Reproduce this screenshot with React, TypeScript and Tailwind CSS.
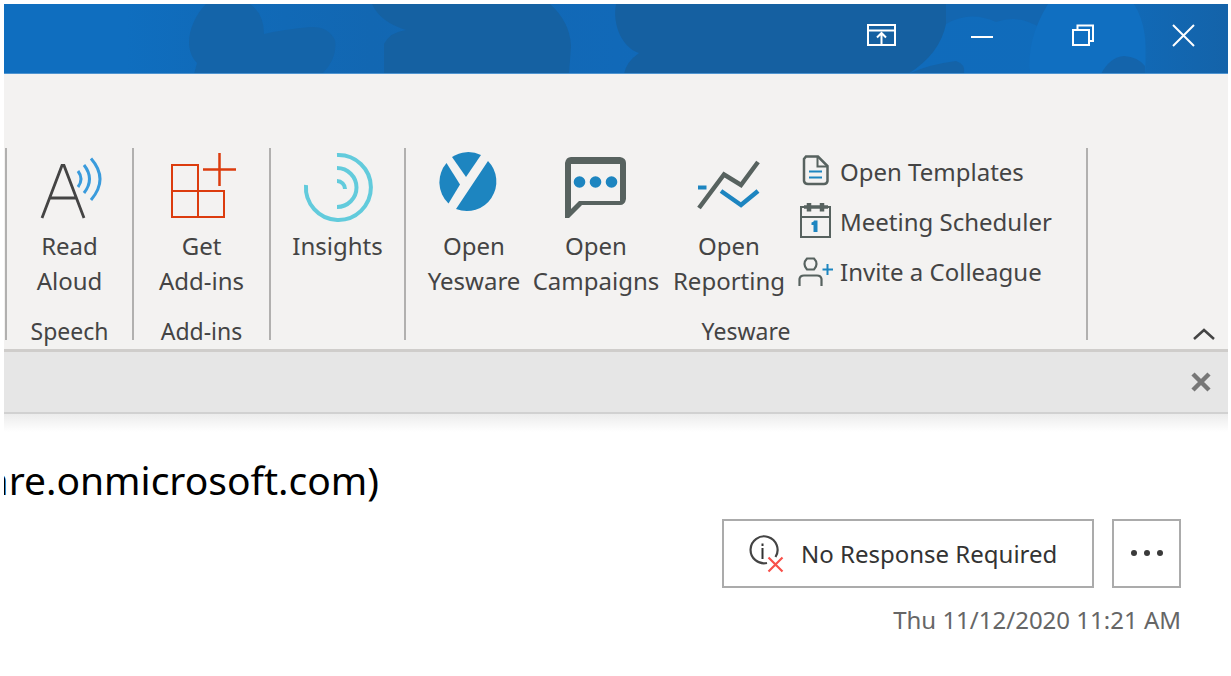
import type { ReactNode } from "react";

function TitleBackdrop() {
  return (
    <svg
      className="absolute inset-0 h-full w-full"
      viewBox="4 4 1224 70"
      preserveAspectRatio="xMaxYMin slice"
      aria-hidden="true"
    >
      <defs>
        <linearGradient id="bar" x1="0" x2="1" y1="0" y2="0">
          <stop offset="0" stopColor="#0f6ebf" />
          <stop offset="0.1" stopColor="#0f6ebf" />
          <stop offset="0.16" stopColor="#106bba" />
          <stop offset="0.3" stopColor="#1267b2" />
          <stop offset="0.5" stopColor="#1169b8" />
          <stop offset="0.7" stopColor="#106bbb" />
          <stop offset="1" stopColor="#106cbb" />
        </linearGradient>
        <linearGradient id="corner" x1="0" x2="1" y1="0" y2="0">
          <stop offset="0" stopColor="#1169b6" />
          <stop offset="1" stopColor="#1463a9" />
        </linearGradient>
      </defs>
      <rect x="4" y="4" width="1224" height="70" fill="url(#bar)" />
      <path
        d="M206 4C190 20 182 48 197 63L194 74H322Q338 58 335 40Q328 26 310 27Q280 30 264 34Q264 14 250 4Z"
        fill="#1464a9"
      />
      <path d="M372 4H550Q570 22 571 46L569 74H384V44Q390 32 406 30Q380 22 372 4Z" fill="#1561a2" />
      <path
        d="M616 4C612 24 622 48 639 53Q626 62 624 74H908Q940 54 946 24Q948 12 946 4Z"
        fill="#1560a1"
      />
      <path d="M946 4H1048Q1046 16 1040 28Q1020 14 996 22Q970 10 946 24Z" fill="#1366b0" />
      <path d="M908 74Q930 64 956 61Q966 64 964 74Z" fill="#1463a8" />
      <path d="M1048 4H1134Q1146 22 1145 46V74H1030Q1026 40 1048 4Z" fill="#106fc1" />
      <path d="M1134 4H1228V74H1145Q1150 30 1134 4Z" fill="url(#corner)" />
      <path d="M1101 74Q1110 57 1124 56Q1138 57 1145 66V74Z" fill="#1464ab" />
      <rect x="4" y="73" width="1224" height="1" fill="#4e94d0" />
    </svg>
  );
}

function TitleButton({ label, children }: { label: string; children: ReactNode }) {
  return (
    <button type="button" aria-label={label} className="flex h-10 w-10 items-center justify-center text-white">
      {children}
    </button>
  );
}

function TitleBar() {
  return (
    <header className="relative h-[70px] bg-[#0f6ebf]">
      <TitleBackdrop />
      <div className="relative flex items-start justify-end gap-[61px] pt-[11px] pr-6">
        <TitleButton label="Ribbon display options">
          <svg width="30" height="24" viewBox="0 0 30 24" fill="none" stroke="currentColor" strokeWidth="2">
            <path d="M2 2H29V22H2ZM2 7.500H29" />
            <path d="M15.500 22V9.500M11 14.500L15.500 10L20 14.500" />
          </svg>
        </TitleButton>
        <TitleButton label="Minimize">
          <svg width="24" height="24" viewBox="0 0 24 24" stroke="currentColor" strokeWidth="2">
            <path d="M1 14H23" />
          </svg>
        </TitleButton>
        <TitleButton label="Restore">
          <svg width="24" height="24" viewBox="0 0 24 24" fill="none" stroke="currentColor" strokeWidth="2">
            <path d="M2 7H18V22H2ZM6.500 7V2.500H22V18H18" />
          </svg>
        </TitleButton>
        <TitleButton label="Close">
          <svg width="24" height="24" viewBox="0 0 24 24" stroke="currentColor" strokeWidth="2">
            <path d="M1 2L22 23M22 2L1 23" />
          </svg>
        </TitleButton>
      </div>
    </header>
  );
}

function ReadAloudIcon() {
  return (
    <svg width="70" height="80" viewBox="35 148 70 80" fill="none" aria-hidden="true">
      <path d="M42 218L62 165.500H64L84 218M49.500 198H76.500" stroke="#444" strokeWidth="2.800" />
      <g stroke="#3a9bdc" strokeWidth="3">
        <path d="M78 171Q84 179 78 187" />
        <path d="M84 165Q95 179 84 193" />
        <path d="M91 158.500Q109 179 91 200" />
      </g>
    </svg>
  );
}

function AddInsIcon() {
  return (
    <svg width="70" height="80" viewBox="167 148 70 80" fill="none" stroke="#dc3c0e" strokeWidth="2" aria-hidden="true">
      <path d="M172 165H198V217H172ZM172 191H224V217H198" />
      <path d="M203 169.500H236M219.500 153V186" strokeWidth="2.500" />
    </svg>
  );
}

function InsightsIcon() {
  return (
    <svg width="76" height="80" viewBox="300 148 76 80" fill="none" stroke="#62cbdc" strokeWidth="4" aria-hidden="true">
      <path d="M337 155A32.500 32.500 0 1 1 306 185" />
      <path d="M337 168A19.500 19.500 0 0 1 337 207" />
      <path d="M337 181A8 8 0 0 1 345 189" />
    </svg>
  );
}

function YeswareIcon() {
  return (
    <svg width="76" height="80" viewBox="436 148 76 80" fill="#1d85c0" aria-hidden="true">
      <path d="M452 157A29.500 29.500 0 0 1 481 155L466 177Z" />
      <path d="M446.500 163L460 184.500L448.500 203.500A29.500 29.500 0 0 1 446.500 163Z" />
      <path d="M488 161A29.500 29.500 0 0 1 456 209Z" />
    </svg>
  );
}

function CampaignsIcon() {
  return (
    <svg width="70" height="80" viewBox="561 148 70 80" aria-hidden="true">
      <path
        fill="#57625f"
        fillRule="evenodd"
        d="M571 157H620Q626 158 626 163V199Q625 205 620 205H582L569 218H565V163Q566 157 571 157ZM571 164V209L579 201H620V164Z"
      />
      <g fill="#1d85c0">
        <circle cx="579.500" cy="182" r="5.800" />
        <circle cx="595.500" cy="182" r="5.800" />
        <circle cx="611.500" cy="182" r="5.800" />
      </g>
    </svg>
  );
}

function ReportingIcon() {
  return (
    <svg width="70" height="80" viewBox="694 148 70 80" fill="none" strokeWidth="4.500" aria-hidden="true">
      <path d="M699 208L724 174.500L741 185L758 162" stroke="#57625f" />
      <path d="M698 187.500H706.500" stroke="#1d85c0" strokeWidth="4" />
      <path d="M721 191L741 205L758 191" stroke="#1d85c0" />
    </svg>
  );
}

function TemplatesIcon() {
  return (
    <svg width="36" height="40" viewBox="798 152 36 40" fill="none" stroke="#57625f" strokeWidth="2.500" aria-hidden="true">
      <path d="M806 156.500H818L827.500 166V181Q827 184 824 184H808Q804.500 184 804 181V159Z" />
      <path d="M817.500 156.500V166.500H827.500" strokeWidth="2" />
      <path d="M809 171.500H822M809 177.500H822" stroke="#1d85c0" strokeWidth="2.200" />
    </svg>
  );
}

function SchedulerIcon() {
  return (
    <svg width="36" height="40" viewBox="798 202 36 40" fill="none" stroke="#57625f" strokeWidth="2" aria-hidden="true">
      <path d="M801 207H830V237H801ZM801 217H830" />
      <path d="M804 207H828" strokeWidth="3.500" />
      <path d="M809 203V211.500M822 203V211.500" strokeWidth="4.500" />
      <path d="M811.500 222.500Q814 222 814 220.500H817.500V232H813.500V225H811.500Z" fill="#1d85c0" stroke="none" />
    </svg>
  );
}

function InviteIcon() {
  return (
    <svg width="36" height="40" viewBox="798 252 36 40" fill="none" stroke="#57625f" strokeWidth="2.200" aria-hidden="true">
      <path d="M807 258.500H814Q816.500 261 816.500 264Q816.500 267 814 269.500H807Q804.500 267 804.500 264Q804.500 261 807 258.500Z" />
      <path d="M799.500 286V279Q800 275.500 804 275.500H817Q821 275.500 821.500 279V286" />
      <path d="M822.500 269.500H833M827.500 264V275" stroke="#1d85c0" strokeWidth="2" />
    </svg>
  );
}

function RibbonButton({ icon, lines, className = "" }: { icon: ReactNode; lines: string[]; className?: string }) {
  return (
    <button type="button" className={`flex flex-col items-center text-2xl leading-[35px] whitespace-nowrap ${className}`}>
      {icon}
      {lines.map((line) => (
        <span key={line}>{line}</span>
      ))}
    </button>
  );
}

function RibbonGroup({ title, className, children }: { title?: string; className: string; children: ReactNode }) {
  return (
    <section className={`flex h-48 flex-col justify-between border-l-2 border-[#b1b0af] ${className}`}>
      {children}
      {title && <h2 className="text-center text-[23px] leading-[18px]">{title}</h2>}
    </section>
  );
}

function SmallButton({ icon, label }: { icon: ReactNode; label: string }) {
  return (
    <button type="button" className="flex h-[50px] items-center gap-1.5 pb-0.5 text-2xl whitespace-nowrap">
      {icon}
      {label}
    </button>
  );
}

function Ribbon() {
  return (
    <div className="flex border-b-[3px] border-[#cfcdcb] bg-[#f3f2f1] pt-[74px] pb-[9px] pl-px text-[#444]">
      <RibbonGroup title="Speech" className="w-[127px]">
        <RibbonButton icon={<ReadAloudIcon />} lines={["Read", "Aloud"]} />
      </RibbonGroup>
      <RibbonGroup title="Add-ins" className="w-[137px]">
        <RibbonButton icon={<AddInsIcon />} lines={["Get", "Add-ins"]} />
      </RibbonGroup>
      <RibbonGroup className="w-[135px]">
        <RibbonButton icon={<InsightsIcon />} lines={["Insights"]} />
      </RibbonGroup>
      <RibbonGroup title="Yesware" className="w-[684px] border-r-2">
        <div className="flex gap-2.5 pl-[22px]">
          <RibbonButton className="w-[92px]" icon={<YeswareIcon />} lines={["Open", "Yesware"]} />
          <RibbonButton className="w-[132px]" icon={<CampaignsIcon />} lines={["Open", "Campaigns"]} />
          <RibbonButton className="w-[114px]" icon={<ReportingIcon />} lines={["Open", "Reporting"]} />
          <div className="flex flex-col pl-0.5">
            <SmallButton icon={<TemplatesIcon />} label="Open Templates" />
            <SmallButton icon={<SchedulerIcon />} label="Meeting Scheduler" />
            <SmallButton icon={<InviteIcon />} label="Invite a Colleague" />
          </div>
        </div>
      </RibbonGroup>
      <button type="button" aria-label="Collapse the ribbon" className="mr-3 ml-auto self-end">
        <svg width="24" height="16" viewBox="0 0 24 16" fill="none" stroke="#444" strokeWidth="2.500">
          <path d="M2 15L12 6L22 15" />
        </svg>
      </button>
    </div>
  );
}

export default function App() {
  return (
    <div className="min-h-screen bg-white pt-1 pr-[3px] pl-1 font-['Noto_Sans',sans-serif]">
      <TitleBar />
      <Ribbon />
      <div className="flex h-[62px] items-center justify-end border-b-2 border-[#d1d1d1] bg-[#e6e6e6] pr-[17px]">
        <button type="button" aria-label="Dismiss">
          <svg width="20" height="20" viewBox="0 0 20 20" stroke="#777" strokeWidth="4.500">
            <path d="M2 2L18 18M18 2L2 18" />
          </svg>
        </button>
      </div>
      <main className="bg-linear-to-b from-[#ececec] to-white to-[18px]">
        <div className="flex w-[375px] justify-end overflow-hidden pt-10">
          <h1 className="text-[39px] leading-[52px] whitespace-nowrap text-black">are.onmicrosoft.com)</h1>
        </div>
        <div className="flex justify-end gap-[18px] pt-[13px] pr-[47px]">
          <button
            type="button"
            className="flex h-[69px] w-[372px] items-center gap-4 border-2 border-[#ababab] bg-white pl-6 text-2xl whitespace-nowrap text-[#333]"
          >
            <svg width="37" height="40" viewBox="747 533 37 40" fill="none" aria-hidden="true">
              <path d="M766 562A13.500 13.500 0 1 1 774.500 556" stroke="#444" strokeWidth="2.200" />
              <path d="M761.500 547V558M761.500 542.500V545" stroke="#333" strokeWidth="2" />
              <path d="M767.500 556.500L781.500 570.500M781.500 556.500L767.500 570.500" stroke="#f8504a" strokeWidth="2.200" />
            </svg>
            No Response Required
          </button>
          <button
            type="button"
            aria-label="More actions"
            className="flex h-[69px] w-[69px] items-center justify-center border-2 border-[#ababab] bg-white"
          >
            <svg width="36" height="8" viewBox="0 0 36 8" fill="#3a3a3a">
              <circle cx="5" cy="3" r="3" />
              <circle cx="18" cy="3" r="3" />
              <circle cx="31" cy="3" r="3" />
            </svg>
          </button>
        </div>
        <p className="pt-[14px] pr-[47px] text-right text-2xl leading-9 text-[#666]">
          <time dateTime="2020-11-12T11:21">Thu 11/12/2020 11:21 AM</time>
        </p>
      </main>
    </div>
  );
}
